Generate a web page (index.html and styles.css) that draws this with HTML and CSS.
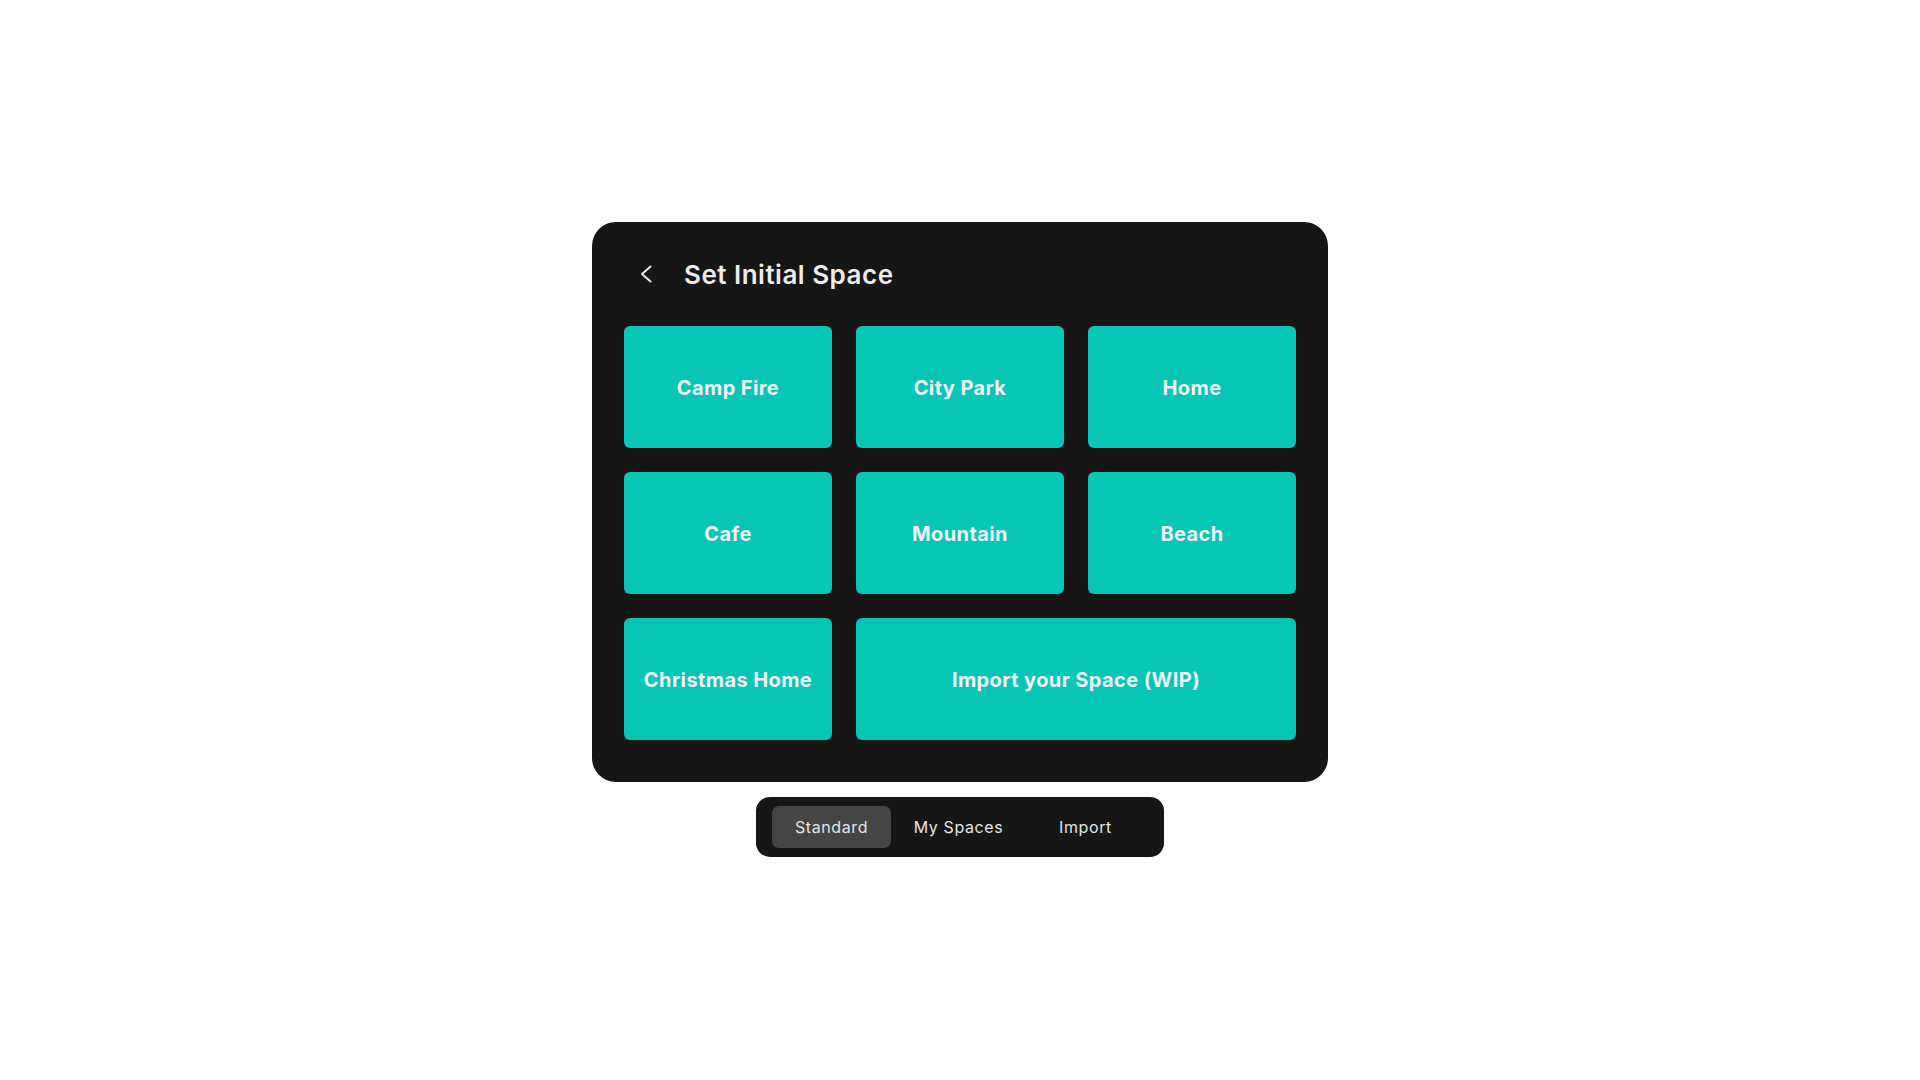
FILE: index.html
```html
<!DOCTYPE html>
<html lang="en">
<head>
<meta charset="utf-8">
<title>Set Initial Space</title>
<link rel="stylesheet" href="styles.css">
</head>
<body>
<main class="stage">
  <section class="panel">
    <header class="panel-header">
      <button class="back" aria-label="Back">
        <svg width="15" height="18" viewBox="0 0 15 18" fill="none">
          <path d="M11.5 1.5 L3 9 L11.5 16.5" stroke="#ececec" stroke-width="2" stroke-linecap="round" stroke-linejoin="round"/>
        </svg>
      </button>
      <h1 class="title">Set Initial Space</h1>
    </header>
    <div class="grid">
      <button class="tile">Camp Fire</button>
      <button class="tile">City Park</button>
      <button class="tile">Home</button>
      <button class="tile">Cafe</button>
      <button class="tile">Mountain</button>
      <button class="tile">Beach</button>
      <button class="tile">Christmas Home</button>
      <button class="tile tile-wide">Import your Space (WIP)</button>
    </div>
  </section>
  <nav class="tabs">
    <button class="tab tab-active">Standard</button>
    <button class="tab">My Spaces</button>
    <button class="tab">Import</button>
  </nav>
</main>
</body>
</html>
```
FILE: styles.css
```css
* { box-sizing: border-box; }

html, body {
  margin: 0;
  padding: 0;
  background: #ffffff;
  font-family: Inter, "Noto Sans", "Liberation Sans", sans-serif;
}

.stage {
  width: 1920px;
  height: 1080px;
  padding-bottom: 2px;
  display: flex;
  flex-direction: column;
  align-items: center;
  justify-content: center;
  gap: 15px;
}

.panel {
  width: 736px;
  background: #161616;
  border-radius: 24px;
  padding: 32px 32px 42px 32px;
  display: flex;
  flex-direction: column;
  gap: 32px;
}

.panel-header {
  height: 40px;
  display: flex;
  align-items: center;
  padding-left: 14px;
  gap: 29px;
}

.back {
  width: 17px;
  height: 20px;
  padding: 0;
  margin: 0;
  border: 0;
  background: transparent;
  display: flex;
  align-items: center;
  justify-content: center;
}

.title {
  margin: 0;
  padding-top: 2px;
  font-size: 26px;
  line-height: 40px;
  font-weight: 600;
  color: #ececec;
  letter-spacing: 0.5px;
}

.grid {
  display: grid;
  grid-template-columns: repeat(3, 208px);
  grid-auto-rows: 122px;
  gap: 24px;
}

.tile {
  border: 0;
  margin: 0;
  padding: 2px 0 0 0;
  background: #08c6b6;
  border-radius: 6px;
  color: #eef2f1;
  font-family: Inter, "Noto Sans", "Liberation Sans", sans-serif;
  font-size: 20px;
  font-weight: 700;
  letter-spacing: 0.4px;
  display: flex;
  align-items: center;
  justify-content: center;
}

.tile-wide {
  grid-column: span 2;
}

.tabs {
  width: 408px;
  height: 60px;
  background: #161616;
  border-radius: 14px;
  padding: 9px 19px 9px 16px;
  display: flex;
  gap: 8px;
  align-items: stretch;
}

.tab {
  width: 119px;
  border: 0;
  margin: 0;
  padding: 0;
  background: transparent;
  border-radius: 7px;
  color: #e4e4e4;
  font-family: Inter, "Noto Sans", "Liberation Sans", sans-serif;
  font-size: 16px;
  font-weight: 400;
  letter-spacing: 0.6px;
}

.tab-active {
  background: #454545;
}
```
